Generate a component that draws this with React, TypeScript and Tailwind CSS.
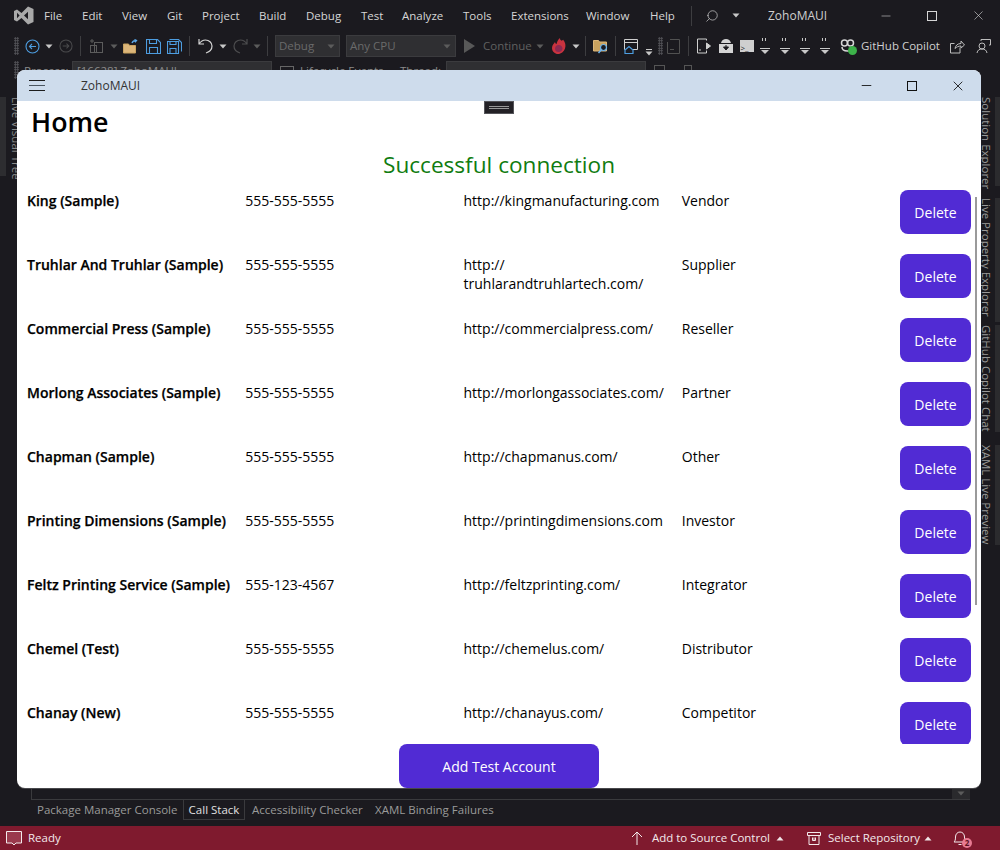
import React from "react";
import { X, Minus, Search } from "lucide-react";

const menus: [string, number][] = [["File",38],["Edit",40],["View",45],["Git",35],["Project",57],["Build",47],["Debug",55],["Test",41],["Analyze",61],["Tools",48],["Extensions",75],["Window",64]];

const rows: [string, string, string, string][] = [
  ["King (Sample)", "555-555-5555", "http://kingmanufacturing.com", "Vendor"],
  ["Truhlar And Truhlar (Sample)", "555-555-5555", "http://\ntruhlarandtruhlartech.com/", "Supplier"],
  ["Commercial Press (Sample)", "555-555-5555", "http://commercialpress.com/", "Reseller"],
  ["Morlong Associates (Sample)", "555-555-5555", "http://morlongassociates.com/", "Partner"],
  ["Chapman (Sample)", "555-555-5555", "http://chapmanus.com/", "Other"],
  ["Printing Dimensions (Sample)", "555-555-5555", "http://printingdimensions.com", "Investor"],
  ["Feltz Printing Service (Sample)", "555-123-4567", "http://feltzprinting.com/", "Integrator"],
  ["Chemel (Test)", "555-555-5555", "http://chemelus.com/", "Distributor"],
  ["Chanay (New)", "555-555-5555", "http://chanayus.com/", "Competitor"],
];

function Caret({ dim }: { dim?: boolean }) {
  return (
    <svg width="8" height="5" viewBox="0 0 8 5" className="shrink-0">
      <path d="M0.5 0.5H7.5L4 4.5Z" fill={dim ? "#5c5c5c" : "#c8c8c8"} />
    </svg>
  );
}
function UpCaret() {
  return (
    <svg width="8" height="5" viewBox="0 0 8 5" className="shrink-0">
      <path d="M0.5 4.5H7.5L4 0.5Z" fill="#f0e6e8" />
    </svg>
  );
}
function Sep() {
  return <div className="w-px h-[20px] bg-[#3d3d40] shrink-0" />;
}
function Grip() {
  return (
    <div className="w-[5px] h-[18px] shrink-0 bg-[radial-gradient(#55555a_1px,transparent_1px)] bg-[length:2.5px_2.5px]" />
  );
}
function Cell({ w, children }: { w: number; children?: React.ReactNode }) {
  return (
    <div className="flex items-center justify-center shrink-0 h-full" style={{ width: w }}>
      {children}
    </div>
  );
}
function DropGrip() {
  return (
    <svg width="10" height="18" viewBox="0 0 10 18" fill="none">
      <path d="M2.500 1v3M5.500 1v3" stroke="#c8c8c8" strokeWidth="1" />
      <path d="M0 11.500h10" stroke="#c8c8c8" />
      <path d="M1 13h8l-4 4z" fill="#c8c8c8" />
    </svg>
  );
}
function VsLogo() {
  return (
    <svg width="21" height="19" viewBox="0 0 21 19">
      <path
        fill="#a9a9a9"
        d="M15 0.5 L20.500 3 V16 L15 18.500 L8.500 12 L4 15.500 L1 14 V5 L4 3.500 L8.500 7 Z M4 6.800 V12.200 L6.600 9.500 Z M15 5.800 L11 9.500 L15 13.200 Z"
      />
    </svg>
  );
}
function Fire() {
  return (
    <svg width="18" height="18" viewBox="0 0 18 18">
      <path d="M10 1c-.4 3 3.500 3.500 3 1.500 2.500 3 3 6 2 9-1 3-4 5.500-7 5.500S2 14.500 2 11c0-3 2-4.500 3-6 .3 1.500 1 2 1.500 2C7 5 8 2.500 10 1Z" fill="#c9333f" />
      <path d="M8.500 8c2.500 0 4 1.700 4 3.500S11 15 8.500 15 5 13.200 5 11.500 6.500 8 8.500 8Z" fill="#8c2a52" />
    </svg>
  );
}

function Toolbar() {
  return (
    <div className="flex items-center h-[30px] pl-[14px] shrink-0">
      <Grip />
      <Cell w={26}>
        <svg width="15" height="15" viewBox="0 0 15 15" fill="none" stroke="#4d9de0" strokeWidth="1.100">
          <circle cx="7.500" cy="7.500" r="6.500" /><path d="M11 7.500H4.500M7 5 4.500 7.500 7 10" />
        </svg>
      </Cell>
      <Cell w={8}><Caret /></Cell>
      <Cell w={26}>
        <svg width="14" height="14" viewBox="0 0 15 15" fill="none" stroke="#4a4a4c" strokeWidth="1.100">
          <circle cx="7.500" cy="7.500" r="6.500" /><path d="M4 7.500h6.500M8 5l2.500 2.500L8 10" />
        </svg>
      </Cell>
      <Cell w={3}><Sep /></Cell>
      <Cell w={30}>
        <svg width="16" height="16" viewBox="0 0 16 16" fill="none" stroke="#5c5c5c">
          <rect x="5.500" y="4.500" width="8" height="10" /><rect x="1.500" y="7.500" width="6" height="7" /><path d="M3 1v4M1 3h4" />
        </svg>
      </Cell>
      <Cell w={4}><Caret dim /></Cell>
      <Cell w={30}>
        <svg width="16" height="15" viewBox="0 0 16 15">
          <path d="M0.500 5h5l1 1.500h6V14h-12Z" fill="#dcb67a" stroke="#c9a25f" />
          <path d="M9 4c.5-1.500 2-2.500 4-2.500M11.500 .5l2 1-1.500 1.700" fill="none" stroke="#5aa7e8" strokeWidth="1.300" />
        </svg>
      </Cell>
      <Cell w={14}>
        <svg width="15" height="15" viewBox="0 0 15 15" fill="none" stroke="#4d9de0" strokeWidth="1.100" className="shrink-0">
          <path d="M.5.5h11l3 3v11H.5Z" /><path d="M3.500.5v4h7v-4M3.500 14.500v-6h8v6" />
        </svg>
      </Cell>
      <Cell w={28}>
        <svg width="15" height="15" viewBox="0 0 15 15" fill="none" stroke="#4d9de0" strokeWidth="1.100">
          <path d="M2.500.5h9l3 3v9M.5 2.500h11v12H.5Z" /><path d="M3 2.500v3h6v-3M3 14.500v-5h6v5" />
        </svg>
      </Cell>
      <Cell w={3}><Sep /></Cell>
      <Cell w={28}>
        <svg width="15" height="16" viewBox="0 0 15 16" fill="none" stroke="#d6d6d6" strokeWidth="1.200">
          <path d="M1 1v5h5M1 6c2-3 4-4 6.500-4C11 2 14 4.500 14 8c0 3.500-3 6-6 7" />
        </svg>
      </Cell>
      <Cell w={8}><Caret /></Cell>
      <Cell w={26}>
        <svg width="15" height="16" viewBox="0 0 15 16" fill="none" stroke="#4d4d4f" strokeWidth="1.200">
          <path d="M14 1v5H9M14 6c-2-3-4-4-6.500-4C4 2 1 4.500 1 8c0 3.500 3 6 6 7" />
        </svg>
      </Cell>
      <Cell w={8}><Caret dim /></Cell>
      <Cell w={12}><Sep /></Cell>
      <Cell w={2} />
      <div className="flex items-center justify-between shrink-0 w-[65px] h-[22px] pl-[3px] pr-[4px] bg-[#2f2f32] border border-[#3b3b3e] text-[11.5px] text-[#6a6a6a]">
        <span>Debug</span><Caret dim />
      </div>
      <div className="w-[6px] shrink-0" />
      <div className="flex items-center justify-between shrink-0 w-[110px] h-[22px] pl-[3px] pr-[4px] bg-[#2f2f32] border border-[#3b3b3e] text-[11.5px] text-[#6a6a6a]">
        <span>Any CPU</span><Caret dim />
      </div>
      <Cell w={27}>
        <svg width="11" height="14" viewBox="0 0 11 14"><path d="M0 0l11 7-11 7Z" fill="#585858" /></svg>
      </Cell>
      <span className="text-[11.5px] text-[#606060] w-[52px] shrink-0">Continue</span>
      <Cell w={10}><Caret dim /></Cell>
      <Cell w={27}><Fire /></Cell>
      <Cell w={8}><Caret /></Cell>
      <Cell w={11}><Sep /></Cell>
      <Cell w={20}>
        <svg width="16" height="15" viewBox="0 0 16 15" className="shrink-0">
          <path d="M.5 1.500h5l1 1.500h7v9H.5Z" fill="#c9a25f" stroke="#dcb67a" />
          <circle cx="10.500" cy="8.500" r="3" fill="#1b1a1f" stroke="#6cb4ee" strokeWidth="1.200" />
          <path d="M8.500 10.500 5.500 14" stroke="#6cb4ee" strokeWidth="1.500" />
        </svg>
      </Cell>
      <Cell w={9}><Sep /></Cell>
      <Cell w={22}>
        <svg width="15" height="16" viewBox="0 0 15 16" fill="none">
          <path d="M.5 1.500h13v10H.5ZM.5 4.500h13" stroke="#cfcfcf" />
          <path d="M1 12l4-3.500L9 12v3.500H1Z" fill="#1b1a1f" stroke="#4d9de0" strokeWidth="1.200" />
        </svg>
      </Cell>
      <Cell w={14}>
        <div className="flex flex-col items-center gap-[1px] mt-[12px]"><div className="w-[6px] h-px bg-[#c8c8c8]" /><Caret /></div>
      </Cell>
      <Cell w={8}><Grip /></Cell>
      <Cell w={18}>
        <svg width="13" height="15" viewBox="0 0 13 15" fill="none" stroke="#515151">
          <path d="M3 .5h9.500v14H.5V3M3 10.500h4" />
        </svg>
      </Cell>
      <Cell w={12}><Sep /></Cell>
      <Cell w={20}>
        <svg width="14" height="16" viewBox="0 0 14 16" fill="none" stroke="#cfcfcf">
          <path d="M9.500 2.500V1H.5v14h9v-2.500" /><path d="M9.500 5l4 3-4 3Z" fill="#cfcfcf" /><path d="M2 12h2" />
        </svg>
      </Cell>
      <Cell w={24}>
        <svg width="16" height="16" viewBox="0 0 16 16" fill="#d4d4d4">
          <path d="M3 5c.6-2.600 2.600-4 5-4s4.400 1.400 5 4ZM1 6h14v9H1Z" />
          <path d="M8 7v4M5.500 9 8 12l2.500-3Z" stroke="#1b1a1f" fill="#1b1a1f" />
        </svg>
      </Cell>
      <Cell w={17}>
        <div className="w-[14px] h-[12px] shrink-0 bg-[#cfcfcf] flex items-end pl-[1px] text-[8px] leading-[9px] text-[#1b1a1f]">&gt;_</div>
      </Cell>
      <Cell w={20}><DropGrip /></Cell>
      <Cell w={20}><DropGrip /></Cell>
      <Cell w={20}><DropGrip /></Cell>
      <Cell w={20}><DropGrip /></Cell>
      <Cell w={24}>
        <div className="relative w-[15px] h-[15px]">
          <svg width="15" height="13" viewBox="0 0 15 13" fill="none" stroke="#d6d6d6" strokeWidth="1.500">
            <circle cx="4.500" cy="4" r="3" /><circle cx="10.500" cy="4" r="3" /><path d="M2 8c0 3 3 4 5.500 4S13 11 13 8" />
          </svg>
          <div className="absolute right-[-2px] bottom-[-1px] w-[9px] h-[9px] rounded-full bg-[#3db34a]" />
        </div>
      </Cell>
      <span className="text-[11.5px] text-[#d0d0d0] ml-[2px] w-[80px] shrink-0 whitespace-nowrap">GitHub Copilot</span>
      <Cell w={32}>
        <svg width="15" height="15" viewBox="0 0 15 15" fill="none" stroke="#bdbdbd">
          <path d="M10 8.500v5.500H.5V4.500h4M5 9.500c.5-3 2.500-5 6-5V2l3.500 4L11 9V7c-2.500 0-4.500 1-6 2.500Z" />
        </svg>
      </Cell>
      <Cell w={20}>
        <svg width="15" height="15" viewBox="0 0 15 15" fill="none" stroke="#bdbdbd">
          <circle cx="6" cy="7" r="3" /><path d="M1 14c.5-3 2.500-4 5-4s4.500 1 5 4M5 2V.5h9.500V6H13" />
        </svg>
      </Cell>
    </div>
  );
}

function SideLabel({ children, h, band }: { children: string; h: number; band: number }) {
  return (
    <div className="flex shrink-0" style={{ height: h }}>
      <div className="[writing-mode:vertical-rl] w-[14px] ml-[-2px] text-[11.5px] leading-[14px] text-[#9a9a9a] whitespace-nowrap">
        {children}
      </div>
      <div className="ml-auto w-[5px] bg-[#2b2b2e]" style={{ height: band }} />
    </div>
  );
}

function Row({ row }: { row: [string, string, string, string] }) {
  return (
    <div className="grid grid-cols-[218.25px_218.25px_218.25px_218.25px_71px] h-[44px] shrink-0">
      <div className="pt-px font-semibold [-webkit-text-stroke:0.25px_black] text-[14px] leading-[19px] text-black whitespace-nowrap">{row[0]}</div>
      <div className="pt-px text-[14px] leading-[19px] text-black">{row[1]}</div>
      <div className="pt-px text-[14px] leading-[19px] text-black whitespace-pre-line">{row[2]}</div>
      <div className="pt-px text-[14px] leading-[19px] text-black">{row[3]}</div>
      <button className="h-[44px] rounded-[8px] bg-[#512bd4] text-white text-[14px]">Delete</button>
    </div>
  );
}

export default function App() {
  return (
    <div className="relative w-[1000px] h-[850px] overflow-hidden bg-[#1b1a1f] flex flex-col font-['Open_Sans',sans-serif]">
      {/* menu */}
      <div className="flex items-center h-[31px] shrink-0 text-[11.5px] text-[#d6d6d6]">
        <div className="w-[44px] flex justify-center pl-[2px] shrink-0"><VsLogo /></div>
        {menus.map(([m, w]) => (
          <span key={m} className="shrink-0" style={{ width: w }}>{m}</span>
        ))}
        <span className="w-[41px] shrink-0">Help</span>
        <div className="w-px h-[20px] bg-[#3d3d40] shrink-0" />
        <Cell w={40}><Search size={14} strokeWidth={1.2} className="text-[#cfcfcf] -scale-x-100" /></Cell>
        <Caret />
        <span className="ml-[28px] w-[58px] shrink-0 text-[12px] whitespace-nowrap text-[#cfcfcf]">ZohoMAUI</span>
        <div className="w-[37px] shrink-0" />
        <Cell w={46}><Minus size={14} strokeWidth={1} className="text-[#d6d6d6]" /></Cell>
        <Cell w={46}><div className="w-[10px] h-[10px] border border-[#d6d6d6]" /></Cell>
        <Cell w={46}><X size={15} strokeWidth={1} className="text-[#d6d6d6]" /></Cell>
      </div>
      <Toolbar />
      {/* third bar, almost hidden by the app window */}
      <div className="flex items-start h-[24px] pl-[14px] shrink-0 text-[11.5px] leading-[20px] text-[#8a8a8a] whitespace-nowrap">
        <Grip />
        <span className="ml-[5px] w-[48px] shrink-0">Process:</span>
        <div className="w-[200px] h-[20px] bg-[#2f2f32] border border-[#3b3b3e] pl-[4px] leading-[18px] shrink-0">[16628] ZohoMAUI</div>
        <div className="ml-[8px] mt-[5px] w-[14px] h-[14px] border border-[#666] shrink-0" />
        <span className="ml-[6px] w-[100px] shrink-0">Lifecycle Events</span>
        <span className="w-[46px] shrink-0">Thread:</span>
        <div className="w-[200px] h-[20px] bg-[#2f2f32] border border-[#3b3b3e] shrink-0" />
        <div className="ml-[8px] mt-[4px] w-[11px] h-[8px] border border-[#555] shrink-0" />
        <div className="ml-[19px] mt-[4px] w-[8px] h-[8px] border border-[#555] shrink-0" />
      </div>

      {/* body */}
      <div className="flex-1 flex min-h-0">
        <div className="w-[17px] shrink-0 pt-[12px] flex">
          <div className="w-[6px] h-[79px] shrink-0 bg-[#2d2d30]" />
          <div className="ml-[5px] [writing-mode:vertical-rl] text-[11.5px] leading-[11px] text-[#8a8a8a] whitespace-nowrap">Live Visual Tree</div>
        </div>
        <div className="flex-1 flex justify-between items-end ml-[14px] mr-[11px]">
          <div className="w-px h-[10px] bg-[#3a3a3d]" />
          <div className="w-[18px] h-[11px] bg-[#2a2a2d] flex items-center justify-center"><Caret dim /></div>
        </div>
        <div className="w-[19px] shrink-0 pt-[12px] flex flex-col">
          <SideLabel h={101} band={89}>Solution Explorer</SideLabel>
          <SideLabel h={127} band={124}>Live Property Explorer</SideLabel>
          <SideLabel h={120} band={107}>GitHub Copilot Chat</SideLabel>
          <SideLabel h={110} band={100}>XAML Live Preview</SideLabel>
        </div>
      </div>

      {/* tabs */}
      <div className="h-[27px] shrink-0 ml-[31px] mr-[30px] border-t border-[#3a3a3d] flex text-[11.5px] leading-[19px] text-[#9a9a9a] whitespace-nowrap">
        <span className="ml-[6px] w-[146px] shrink-0">Package Manager Console</span>
        <span className="w-[62px] h-[20px] border border-t-0 border-[#3a3a3d] text-center text-[#e0e0e0] shrink-0">Call Stack</span>
        <span className="ml-[7px] w-[123px] shrink-0">Accessibility Checker</span>
        <span>XAML Binding Failures</span>
      </div>

      {/* status bar */}
      <div className="h-[24px] shrink-0 bg-[#7f1a2e] flex items-center text-[11.5px] text-[#f3e9eb] whitespace-nowrap">
        <Cell w={28}>
          <svg width="16" height="15" viewBox="0 0 16 15" fill="none" stroke="#f3e9eb">
            <path d="M.5.5h15v11.500H10l-2 2-2-2H.5Z" fill="#9a3a4d" />
          </svg>
        </Cell>
        <span>Ready</span>
        <div className="flex-1" />
        <Cell w={14}>
          <svg width="12" height="14" viewBox="0 0 12 14" fill="none" stroke="#f3e9eb"><path d="M6 14V1M1 6l5-5 5 5" /></svg>
        </Cell>
        <span className="ml-[8px]">Add to Source Control</span>
        <span className="ml-[6px] mr-[23px]"><UpCaret /></span>
        <svg width="14" height="13" viewBox="0 0 14 13" fill="none" stroke="#f3e9eb"><path d="M.5.5h13v3H.5ZM2 3.500v9h10v-9M5.500 5.500v3h3v-3M7 5.500v3" /></svg>
        <span className="ml-[7px] w-[90px] shrink-0">Select Repository</span>
        <span className="ml-[6px] mr-[21px]"><UpCaret /></span>
        <div className="relative w-[14px] h-[15px] mr-[33px]">
          <svg width="14" height="15" viewBox="0 0 14 15" fill="none" stroke="#f3e9eb"><path d="M1 11c1-1 1.500-2 1.500-5C2.500 3 4.500 1 7 1s4.500 2 4.500 5c0 3 .5 4 1.500 5ZM5.500 13.500h3" /></svg>
          <div className="absolute right-[-5px] bottom-[-2px] w-[10px] h-[10px] rounded-full bg-[#e87a92] text-[8px] leading-[10px] text-center text-[#5a1020] font-bold">2</div>
        </div>
      </div>

      {/* app window on the desktop */}
      <div className="absolute left-[17px] top-[70px] w-[964px] h-[718px] rounded-[8px] bg-white overflow-hidden flex flex-col shadow-[0_1px_0_#48484c]">
        <div className="h-[31px] shrink-0 bg-[#cedcec] flex items-center text-[12px] text-[#333]">
          <Cell w={40}>
            <svg width="16" height="11" viewBox="0 0 16 11" fill="none">
              <path d="M0 .5h16M0 10.500h16" stroke="#1d1d1d" /><path d="M0 5.500h16" stroke="#4a5560" />
            </svg>
          </Cell>
          <span className="ml-[24px]">ZohoMAUI</span>
          <div className="flex-1" />
          <Cell w={46}><Minus size={15} strokeWidth={1.4} className="text-[#111]" /></Cell>
          <Cell w={46}><div className="w-[10px] h-[10px] border border-[#111]" /></Cell>
          <Cell w={46}><X size={16} strokeWidth={1.3} className="text-[#111]" /></Cell>
        </div>
        <div className="absolute left-[467px] top-[31px] w-[30px] h-[13px] bg-[#232126] border border-[#55555a] flex flex-col justify-center items-center gap-[1px]">
          <div className="w-[20px] h-px bg-[#999]" /><div className="w-[20px] h-px bg-[#999]" />
        </div>
        <div className="h-[42px] shrink-0 pl-[14px] pt-[2px] text-[26.8px] leading-[38px] font-semibold text-black">Home</div>
        <div className="h-[47px] shrink-0 text-center text-[22.6px] leading-[33px] pt-[5px] text-[#107c10]">Successful connection</div>
        <div className="relative h-[554px] shrink-0 overflow-hidden pl-[10px] flex flex-col gap-[20px]">
          {rows.map((r) => <Row key={r[0]} row={r} />)}
          <div className="absolute left-[958px] top-[7px] w-[2px] h-[408px] bg-[#9a9a9a]" />
        </div>
        <div className="flex justify-center">
          <button className="w-[200px] h-[44px] rounded-[8px] bg-[#512bd4] text-white text-[14px]">Add Test Account</button>
        </div>
      </div>
    </div>
  );
}
